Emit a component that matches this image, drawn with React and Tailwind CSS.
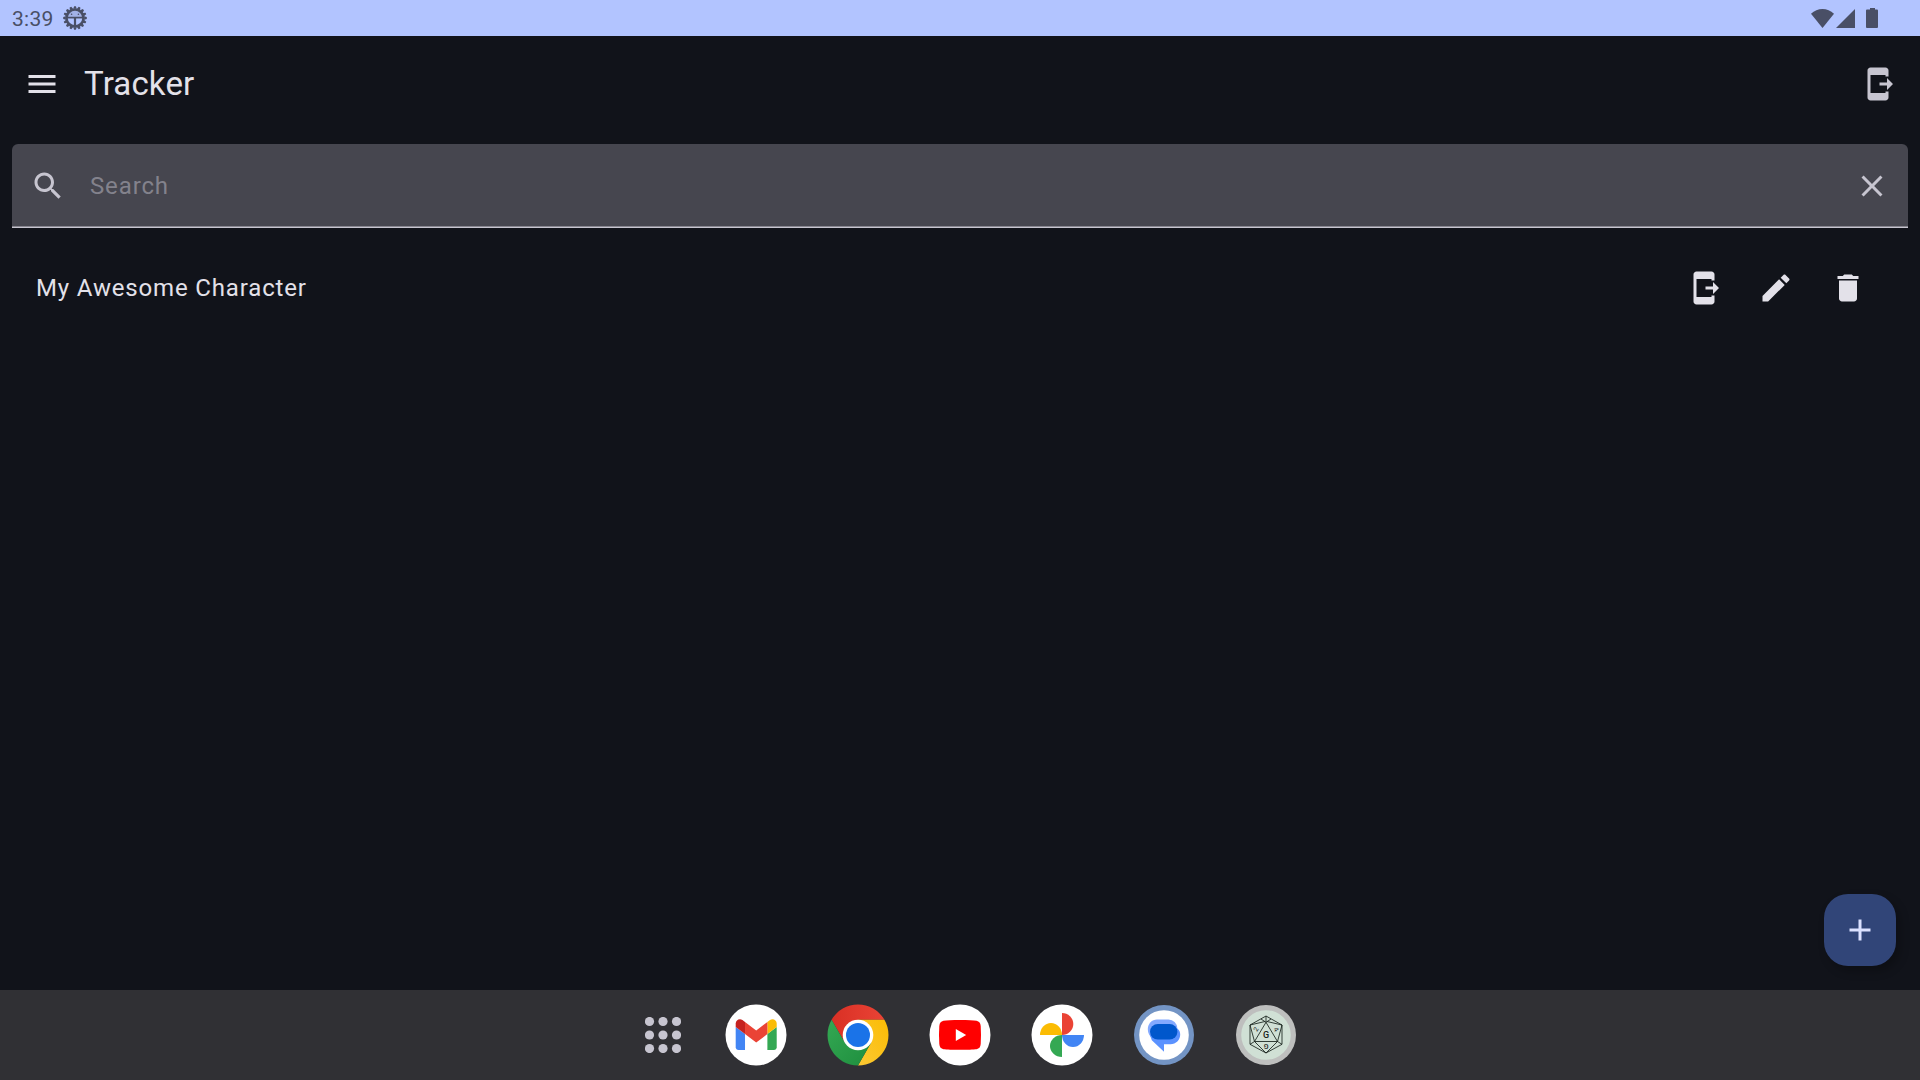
import React from "react";

const PATHS = {
  menu: "M3 18h18v-2H3v2zm0-5h18v-2H3v2zm0-7v2h18V6H3z",
  sendToMobile:
    "M17 17h2v4c0 1.1-.9 2-2 2H7c-1.1 0-2-.9-2-2V3c0-1.1.9-2 2-2h10c1.1 0 2 .9 2 2v4h-2V6H7v12h10v-1zM22 12l-4-4v3h-5v2h5v3l4-4z",
  search:
    "M15.5 14h-.79l-.28-.27C15.41 12.59 16 11.11 16 9.5 16 5.91 13.09 3 9.5 3S3 5.91 3 9.5 5.91 16 9.5 16c1.61 0 3.09-.59 4.23-1.57l.27.28v.79l5 4.99L20.49 19l-4.99-5zm-6 0C7.01 14 5 11.99 5 9.5S7.01 5 9.5 5 14 7.01 14 9.5 11.99 14 9.5 14z",
  close:
    "M19 6.41L17.59 5 12 10.59 6.41 5 5 6.41 10.59 12 5 17.59 6.41 19 12 13.41 17.59 19 19 17.59 13.41 12 19 6.41z",
  edit: "M3 17.25V21h3.75L17.81 9.94l-3.75-3.75L3 17.25zM20.71 7.04c.39-.39.39-1.02 0-1.41l-2.34-2.34c-.39-.39-1.02-.39-1.41 0l-1.83 1.83 3.75 3.75 1.83-1.83z",
  trash:
    "M6 19c0 1.1.9 2 2 2h8c1.1 0 2-.9 2-2V7H6v12zM19 4h-3.5l-1-1h-5l-1 1H5v2h14V4z",
  add: "M19 13h-6v6h-2v-6H5v-2h6V5h2v6h6v2z",
};

function Icon({ name }) {
  return (
    <svg viewBox="0 0 24 24" className="size-9 shrink-0 fill-current">
      <path d={PATHS[name]} />
    </svg>
  );
}

function IconButton({ name, label }) {
  return (
    <button aria-label={label} className="flex size-[72px] items-center justify-center">
      <Icon name={name} />
    </button>
  );
}

const TEETH = Array.from({ length: 16 }, (_, i) => i * 22.5);

function DebugIcon() {
  return (
    <svg viewBox="-12 -12 24 24" className="size-6">
      <circle r="8.5" fill="none" stroke="currentColor" strokeWidth="2.6" />
      {TEETH.map((a) => (
        <path key={a} d="M-1.7 -9.2L-.9 -11.8H.9L1.7 -9.2z" fill="currentColor" transform={`rotate(${a})`} />
      ))}
      <path d="M-8 -.6A8 8 0 0 1 8 -.6z" fill="currentColor" opacity=".15" />
      <path d="M-9 -.4H9" stroke="currentColor" strokeWidth="1.7" />
      <path d="M0 0V9" stroke="currentColor" strokeWidth="2.2" />
      <circle cx="-3.4" cy="-3.8" r=".8" fill="currentColor" />
      <circle cx="3.4" cy="-3.8" r=".8" fill="currentColor" />
    </svg>
  );
}

function StatusBar() {
  return (
    <header className="flex h-9 items-center justify-between bg-[#b2c4ff] pl-3 pr-[42px] text-[#494f66]">
      <div className="flex items-center gap-[9.5px]">
        <span className="mt-0.5 w-[41px] text-[21px] leading-6 tracking-[0.25px]">3:39</span>
        <DebugIcon />
      </div>
      <div className="flex items-center">
        <svg viewBox="0 0 67 20" className="h-5 w-[67px] fill-current">
          <path d="M11.5 20L0 5.7C3.3 2.7 7.2 1 11.5 1S19.7 2.7 23 5.7z" />
          <path d="M25 20L44 1V20z" />
          <path d="M59 0h5v1.6h1.8c.7 0 1.2.5 1.2 1.2v15.9c0 .7-.5 1.3-1.2 1.3h-9.6c-.7 0-1.2-.6-1.2-1.3V2.8c0-.7.5-1.2 1.2-1.2H59z" />
        </svg>
      </div>
    </header>
  );
}

function AppIcon({ children }) {
  return (
    <svg viewBox="-31 -31 62 62" className="size-[62px]">
      {children}
    </svg>
  );
}

function GmailIcon() {
  return (
    <AppIcon>
      <circle r="30.5" fill="#fff" />
      <g transform="translate(-20.3 -15.8) scale(.466) translate(-52 -42)">
        <path fill="#4285f4" d="M58 108h14V74L52 59v43c0 3.32 2.69 6 6 6" />
        <path fill="#34a853" d="M120 108h14c3.32 0 6-2.69 6-6V59l-20 15" />
        <path fill="#fbbc04" d="M120 48v26l20-15v-8c0-7.42-8.47-11.65-14.4-7.2" />
        <path fill="#ea4335" d="M72 74V48l24 18 24-18v26L96 92" />
        <path fill="#c5221f" d="M52 51v8l20 15V48l-5.6-4.2c-5.94-4.45-14.4-.22-14.4 7.2" />
      </g>
    </AppIcon>
  );
}

function ChromeIcon() {
  return (
    <AppIcon>
      <defs>
        <linearGradient id="chromeRed" x1="0" x2="1">
          <stop offset="0" stopColor="#d93025" />
          <stop offset="1" stopColor="#ea4335" />
        </linearGradient>
        <linearGradient id="chromeYellow" x1="0" y1="1" x2="1" y2="0">
          <stop offset="0" stopColor="#fcc934" />
          <stop offset="1" stopColor="#fbbc04" />
        </linearGradient>
        <linearGradient id="chromeGreen" x1="0" y1="0" x2="1" y2="1">
          <stop offset="0" stopColor="#34a853" />
          <stop offset="1" stopColor="#1e8e3e" />
        </linearGradient>
      </defs>
      <path fill="url(#chromeRed)" d="M-26.4 -15.25A30.5 30.5 0 0 1 26.4 -15.25H0L-13.2 7.6z" />
      <path fill="url(#chromeYellow)" d="M26.4 -15.25A30.5 30.5 0 0 1 0 30.5L13.2 7.6L0 -15.25z" />
      <path fill="url(#chromeGreen)" d="M0 30.5A30.5 30.5 0 0 1 -26.4 -15.25L-13.2 7.6L13.2 7.6z" />
      <circle r="15.3" fill="#fff" />
      <circle r="12" fill="#1a73e8" />
    </AppIcon>
  );
}

function YouTubeIcon() {
  return (
    <AppIcon>
      <circle r="30.5" fill="#fff" />
      <path
        fill="#f00"
        d="M0 -15C8 -15 13.5 -14.7 16.5 -14.2C19.2 -13.7 20.5 -11.8 20.7 -9C21.1 -3 21.1 3 20.7 9C20.5 11.8 19.2 13.7 16.5 14.2C11 14.9 -11 14.9 -16.5 14.2C-19.2 13.7 -20.5 11.8 -20.7 9C-21.1 3 -21.1 -3 -20.7 -9C-20.5 -11.8 -19.2 -13.7 -16.5 -14.2C-13.5 -14.7 -8 -15 0 -15z"
      />
      <path fill="#fff" d="M-4.2 -6L6.2 0L-4.2 6z" />
    </AppIcon>
  );
}

function PhotosIcon() {
  return (
    <AppIcon>
      <circle r="30.5" fill="#fff" />
      <path fill="#ea4335" d="M0 0V-22A11.3 11 0 0 1 0 0z" />
      <path fill="#4285f4" d="M0 0H22A11 12 0 0 1 0 0z" />
      <path fill="#34a853" d="M0 0V22A12 11 0 0 1 0 0z" />
      <path fill="#fbbc04" d="M0 0H-22A11 12 0 0 1 0 0z" />
    </AppIcon>
  );
}

function MessagesIcon() {
  return (
    <AppIcon>
      <circle r="30" fill="#7394c4" />
      <circle r="24.8" fill="#fff" />
      <path fill="#83a9ff" d="M-7 -15.6H4.5A9 9 0 0 1 13.3 -7V4H-11C-14.5 1.5 -16.2 -2 -16.2 -6C-16.2 -11.5 -12 -15.6 -7 -15.6z" />
      <path fill="#5b92ff" d="M13.3 -6.4C15.2 -5 16.2 -2.8 16.2 -.5C16.2 5 12 9.2 6.5 9.2H0V16.8L-12.2 5.2L-14 0z" />
      <rect x="-14" y="-11" width="27.4" height="15.6" rx="7.8" fill="#0057cc" />
    </AppIcon>
  );
}

function DiceIcon() {
  return (
    <AppIcon>
      <circle r="30" fill="#bebfbe" />
      <circle r="24.8" fill="#d0e0d5" />
      <g fill="none" stroke="#17211b" strokeWidth=".85" strokeLinejoin="round">
        <path d="M0 -19L16 -10V9.3L0 18L-16 9.3V-10z" />
        <path d="M0 -12.7L11.5 6.5H-11.5z" />
        <path d="M0 -19V-12.7M-16 -10L-1 -13.5M16 -10L1 -13.5M-5 -16L0 -12.7L5 -16M-16 -10L-11.5 6.5L-16 9.3M16 -10L11.5 6.5L16 9.3M-11.5 6.5L0 18L11.5 6.5" />
      </g>
      <g fill="#17211b" fontFamily="Roboto, sans-serif" textAnchor="middle">
        <text x="0" y="3.1" fontSize="9" fontWeight="500">G</text>
        <text fontSize="6.5" transform="translate(-9.8 -5.5) rotate(-60) translate(0 2)">2</text>
        <text fontSize="6.5" transform="translate(10 -5.3) rotate(60) translate(0 2)">4</text>
        <text fontSize="7" fontWeight="500" transform="translate(0 8.5) rotate(180)">G</text>
      </g>
    </AppIcon>
  );
}

const DOTS = [-13.5, 0, 13.5];

function Taskbar() {
  return (
    <nav className="flex h-[90px] items-center bg-[#303034] pl-[645px]">
      <svg viewBox="-18 -18 36 36" className="size-9 fill-[#c7c5d0]">
        {DOTS.map((y) => DOTS.map((x) => <circle key={`${x},${y}`} cx={x} cy={y} r="4.6" />))}
      </svg>
      <div className="ml-11 flex items-center gap-10">
        <GmailIcon />
        <ChromeIcon />
        <YouTubeIcon />
        <PhotosIcon />
        <MessagesIcon />
        <DiceIcon />
      </div>
    </nav>
  );
}

export default function App() {
  return (
    <div className="flex h-screen w-full flex-col overflow-hidden bg-[#11131a] font-[Roboto,sans-serif] text-[#e3e1e9]">
      <StatusBar />
      <div className="flex h-24 items-center justify-between px-1.5">
        <div className="flex items-center">
          <IconButton name="menu" label="Menu" />
          <h1 className="ml-1.5 text-[33px] leading-[42px] tracking-[0.15px]">Tracker</h1>
        </div>
        <div className="text-[#c7c5d0]">
          <IconButton name="sendToMobile" label="Import" />
        </div>
      </div>

      <main className="flex flex-1 flex-col">
        <div className="mx-3 mt-3 flex h-[84px] flex-col rounded-t-md bg-[#46464f] text-[#c7c5d0]">
          <div className="flex h-[82px] items-center pt-0.5">
            <div className="ml-[18px] flex">
              <Icon name="search" />
            </div>
            <span className="ml-6 flex-1 text-2xl tracking-[0.87px] text-[#83828c]">Search</span>
            <IconButton name="close" label="Clear" />
          </div>
          <div className="h-px bg-[#87868f]" />
          <div className="h-px bg-[#c7c5d0]" />
        </div>

        <div className="mt-3 flex h-24 items-center justify-between px-9">
          <span className="text-2xl tracking-[0.84px]">My Awesome Character</span>
          <div className="flex">
            <IconButton name="sendToMobile" label="Export" />
            <IconButton name="edit" label="Edit" />
            <IconButton name="trash" label="Delete" />
          </div>
        </div>

        <div className="mb-6 mr-6 mt-auto flex justify-end">
          <button
            aria-label="Add"
            className="flex size-[72px] items-center justify-center rounded-3xl bg-[#314578] text-[#dbe1ff] shadow-[4px_5px_10px_rgba(0,0,0,0.25)]"
          >
            <Icon name="add" />
          </button>
        </div>
      </main>
      <Taskbar />
    </div>
  );
}
